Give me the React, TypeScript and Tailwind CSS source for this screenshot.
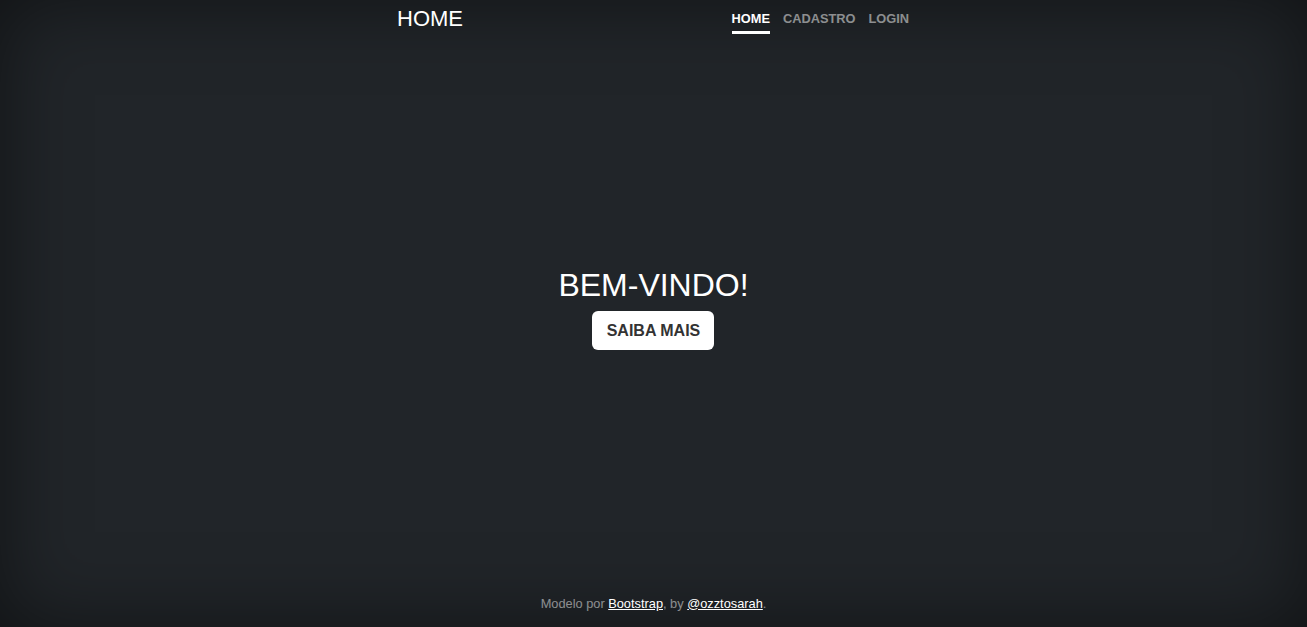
import React from "react";

export default function App() {
  return (
    <div
      className="flex h-screen w-full flex-col bg-[#212529] text-white shadow-[inset_0_0_5rem_rgba(0,0,0,0.5)]"
      style={{ fontFamily: '"Liberation Sans", Arial, sans-serif' }}
    >
      <header className="mx-auto flex w-[513px] items-start justify-between">
        <div className="pt-[6px] text-[22px] leading-[26px] text-white">HOME</div>
        <nav className="flex gap-[13px] pt-[6px] pr-[1px] text-[12.8px] font-bold leading-[19.5px]">
          <a className="border-b-[3px] border-white pt-[3px] pb-[2px] text-white">HOME</a>
          <a className="border-b-[3px] border-transparent pt-[3px] pb-[2px] text-white/50">CADASTRO</a>
          <a className="border-b-[3px] border-transparent pt-[3px] pb-[2px] text-white/50">LOGIN</a>
        </nav>
      </header>
      <main className="flex flex-1 flex-col items-center justify-center">
        <div className="mb-[11px] flex flex-col items-center">
          <h1 className="text-[32px] leading-[38.4px] font-normal">BEM-VINDO!</h1>
          <button className="mt-[7px] h-[39px] w-[122px] rounded-[6px] bg-white text-[16px] font-bold text-[#333]">
            SAIBA MAIS
          </button>
        </div>
      </main>
      <footer className="pb-[14px] text-center text-[12.8px] leading-[19.5px] text-white/50">
        Modelo por <a className="text-white underline">Bootstrap</a>, by{" "}
        <a className="text-white underline">@ozztosarah</a>.
      </footer>
    </div>
  );
}
